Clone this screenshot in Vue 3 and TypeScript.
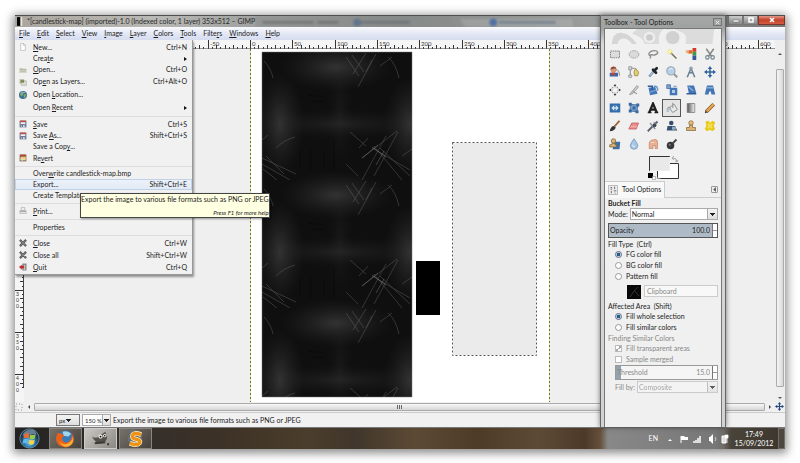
<script setup lang="ts">
import { ref } from 'vue'

interface MenuRow {
  label: string
  keys?: string
  icon?: string
  size?: 'mid' | 'tall'
  submenu?: boolean
  active?: boolean
}

const menuBar = ['_File', '_Edit', '_Select', '_View', '_Image', '_Layer', '_Colors', '_Tools', 'Filte_rs', '_Windows', '_Help']

const groups: MenuRow[][] = [
  [
    { label: '_New...', keys: 'Ctrl+N', icon: 'page', size: 'mid' },
    { label: 'Crea_te', submenu: true },
    { label: '_Open...', keys: 'Ctrl+O', icon: 'folder' },
    { label: 'Op_en as Layers...', keys: 'Ctrl+Alt+O', icon: 'layers', size: 'tall' },
    { label: 'Open _Location...', icon: 'globe', size: 'tall' },
    { label: 'Open _Recent', submenu: true, size: 'tall' },
  ],
  [
    { label: '_Save', keys: 'Ctrl+S', icon: 'save', size: 'mid' },
    { label: 'Save _As...', keys: 'Shift+Ctrl+S', icon: 'save' },
    { label: 'Save a Cop_y...' },
    { label: 'Re_vert', icon: 'revert', size: 'mid' },
  ],
  [
    { label: 'Over_write candlestick-map.bmp' },
    { label: 'Export...', keys: 'Shift+Ctrl+E', active: true },
    { label: 'Create Template...' },
  ],
  [{ label: '_Print...', icon: 'print', size: 'mid' }],
  [{ label: 'Propert_ies', size: 'mid' }],
  [
    { label: '_Close', keys: 'Ctrl+W', icon: 'close', size: 'mid' },
    { label: 'Close all', keys: 'Shift+Ctrl+W', icon: 'close', size: 'mid' },
    { label: '_Quit', keys: 'Ctrl+Q', icon: 'quit', size: 'mid' },
  ],
]

// Splits a label at its mnemonic marker: text before, underlined letter, rest.
function split(label: string): [string, string, string] {
  const i = label.indexOf('_')
  return i < 0 ? [label, '', ''] : [label.slice(0, i), label[i + 1], label.slice(i + 2)]
}

const menuIcons: Record<string, string> = {
  page: '<path d="M3 1h5l3 3v9H3z" fill="#fff" stroke="#a5a5a5"/><path d="M8 1v3h3" fill="#ddd" stroke="#a5a5a5"/>',
  folder: '<path d="M1 4h5l1 1h6v7H1z" fill="#b9bba6"/><path d="M1 7h12v5H1z" fill="#d6d8c4"/><path d="M2 9h10" stroke="#9a9c88"/>',
  layers: '<path d="M1 2h8v8H1z" fill="#b8bd97"/><path d="M4 5h9v8H4z" fill="#dcdccf" stroke="#aaa"/><path d="M3 4h6v4H3z" fill="#73804f"/>',
  globe: '<circle cx="7" cy="7" r="7" fill="#3f6f94"/><path d="M2 4l4-2 2 3-3 4-3-2zM8 7l4-2v4l-3 4z" fill="#7fae6d"/><path d="M3 2l8 1" stroke="#c5dcec"/>',
  save: '<path d="M1 1h12v12H1z" fill="#6f7f97"/><path d="M2 1h10v3H2z" fill="#c94a42"/><path d="M3 4h8v3H3z" fill="#f2f2f2"/><path d="M4 9h6v4H4z" fill="#d8dde4"/><path d="M5 9h2v3H5z" fill="#46546b"/>',
  revert: '<path d="M1 1h12v12H1z" fill="#8a7768"/><path d="M2 1h10v3H2z" fill="#b8453a"/><path d="M3 5h9v5H3z" fill="#f0c66a"/><path d="M2 9l4-4v3h5v3H6v2z" fill="#e7dcae"/>',
  print: '<path d="M4 1h6v5H4z" fill="#f4f4f4" stroke="#999"/><path d="M1 6h12v6H1z" fill="#aaa"/><path d="M2 10h10" stroke="#eee" stroke-width="2"/>',
  close: '<path d="M3 3l8 8M11 3l-8 8" stroke="#5d5d5d" stroke-width="4" stroke-linecap="square"/><path d="M3 3l8 8M11 3l-8 8" stroke="#999"/>',
  quit: '<path d="M6 1h7v12H6z" fill="#777"/><path d="M8 3h3v9H8z" fill="#ccc"/><path d="M0 7l5-4v2h4v4H5v3z" fill="#c22b31"/>',
}

const tools: { name: string; art: string }[] = [
  { name: 'Rectangle Select', art: '<path d="M2 4h12v9H2z" fill="#dcdcdc" stroke="#666" stroke-dasharray="2 1"/>' },
  { name: 'Ellipse Select', art: '<ellipse cx="8" cy="8.500" rx="6.500" ry="5" fill="#dadada" stroke="#888" stroke-dasharray="2 1"/>' },
  { name: 'Free Select', art: '<path d="M5 11C0 9 3 4 9 3.500s7 4 2 5.500-5-1-6 0 1 2-1 5" fill="none" stroke="#8b8b8b" stroke-width="1.800"/>' },
  { name: 'Fuzzy Select', art: '<path d="M6 6l8 8" stroke="#77705a" stroke-width="2"/><path d="M5 1v8M1 5h8M2 2l6 6M8 2L2 8" stroke="#eedd70"/><circle cx="5" cy="5" r="2" fill="#fff6a8"/>' },
  { name: 'Select by Color', art: '<path d="M10 0h5v5h-5z" fill="#d33a2d"/><path d="M10 5h5v5h-5z" fill="#3c9a42"/><path d="M10 10h5v6h-5z" fill="#35579e"/><path d="M1 3h9v5H5L1 6z" fill="#e6b27a"/><path d="M5 3h5v4H5z" fill="#e2662e"/>' },
  { name: 'Scissors Select', art: '<path d="M3 1l7 10M13 1L6 11" stroke="#888" stroke-width="2"/><circle cx="4.500" cy="12.500" r="2.300" fill="none" stroke="#71828c" stroke-width="1.500"/><circle cx="11.500" cy="12.500" r="2.300" fill="none" stroke="#71828c" stroke-width="1.500"/>' },
  { name: 'Foreground Select', art: '<circle cx="6" cy="5" r="4" fill="#d69b78"/><path d="M2 5c0-6 8-6 8 0L8 3z" fill="#8d4a3c"/><path d="M1 9h11v5H1z" fill="#3d66a5"/><path d="M9 5q5 0 5 8" stroke="#999" fill="none" stroke-width="1.500"/><path d="M3 9h5v3H3z" fill="#c44532"/>' },
  { name: 'Paths', art: '<path d="M3 15V3h6" fill="none" stroke="#8b9296" stroke-width="1.500"/><path d="M1 1h4v4H1zM1 12h4v3H1z" fill="#d9dcde" stroke="#888"/><path d="M10 3l4 5-1 5H9L8 8z" fill="#e4d174" stroke="#927e31"/>' },
  { name: 'Color Picker', art: '<path d="M3 14L10 6" stroke="#6a8aa9" stroke-width="3"/><path d="M4 13L10 6" stroke="#e6eef5"/><path d="M8 5l4 4M11 5l2-2" stroke="#20252b" stroke-width="3.500" stroke-linecap="round"/>' },
  { name: 'Zoom', art: '<path d="M10 10l5 5" stroke="#999" stroke-width="3"/><circle cx="6.500" cy="6.500" r="5.500" fill="#b5d0e9" stroke="#9aa7b3" stroke-width="1.500"/><path d="M4 5q2-3 5-1" stroke="#fff" fill="none"/>' },
  { name: 'Measure', art: '<path d="M8 3L3 15M8 3l5 12M5 9h6" stroke="#687e91" stroke-width="2" fill="none"/><circle cx="8" cy="3" r="2.300" fill="#8fa0ae"/>' },
  { name: 'Move', art: '<path d="M8 0l3 4H9v3h3V5l4 3-4 3V9H9v3h2l-3 4-3-4h2V9H4v2L0 8l4-3v2h3V4H5z" fill="#33639f"/>' },
  { name: 'Align', art: '<path d="M8 0l2 3H6zM8 16l2-3H6zM0 8l3-2v4zM16 8l-3-2v4z" fill="#333"/><path d="M4 4l2 2M12 4l-2 2M4 12l2-2M12 12l-2-2" stroke="#555"/><path d="M5 5h6v6H5z" fill="#fafafa" stroke="#ccc"/>' },
  { name: 'Crop', art: '<path d="M2 14L12 2l2 2-8 9z" fill="#d1d1d1" stroke="#888"/><path d="M6 10l6 3" stroke="#999" stroke-width="1.500"/>' },
  { name: 'Rotate', art: '<path d="M2 5l9-1 3 9-10 2z" fill="#4376b6"/><path d="M1 3h6v5" fill="none" stroke="#315c94" stroke-width="2"/><path d="M9 3q6-1 5 6" fill="none" stroke="#6c95c6" stroke-width="2"/><path d="M4 11l8-3" stroke="#9cbbdf"/>' },
  { name: 'Scale', art: '<path d="M5 5h10v10H5z" fill="#4376b6"/><path d="M1 1h5v5H1z" fill="#7fa2cc" stroke="#3a679f"/><path d="M8 8h4v4H8z" fill="#b4cbe5"/><path d="M10 3h4" stroke="#3a679f"/>' },
  { name: 'Shear', art: '<path d="M3 2h9l3 10H5z" fill="#4376b6"/><path d="M2 13h13" stroke="#315c94" stroke-width="2"/><path d="M5 4l6 5" stroke="#8baed8" stroke-width="2"/>' },
  { name: 'Perspective', art: '<path d="M4 2h8l3 12h-5l-1-4H7l-1 4H1z" fill="#4376b6"/><path d="M4 5h8" stroke="#86aad4" stroke-width="2"/>' },
  { name: 'Flip', art: '<path d="M1 2h14v12H1z" fill="#336da9"/><path d="M3 8l4-4v3h2V4l4 4-4 4V9H7v3z" fill="#cfe1f1"/>' },
  { name: 'Cage Transform', art: '<path d="M3 3l10 1-1 9-9-1z" fill="#7ba1ce" stroke="#365f92"/><path d="M1 1h4v4H1zM11 2h4v4h-4zM10 11h4v4h-4zM1 10h4v4H1zM6 6h4v4H6z" fill="#37699f"/>' },
  { name: 'Text', art: '<path d="M3 14L8 2l5 12M5 10h6" fill="none" stroke="#1e1e1e" stroke-width="3"/><path d="M1 14h5M10 14h5" stroke="#1e1e1e" stroke-width="2"/>' },
  { name: 'Bucket Fill', art: '<path d="M5 7l6-4 4 7-6 4q-3-3-4-7z" fill="#e9e9e9" stroke="#777"/><path d="M9 8V1M5 7q-4 0-3 6" stroke="#8e9ba5" stroke-width="1.500" fill="none"/><path d="M1 9l4-1-1 5H1z" fill="#aec1cf"/>' },
  { name: 'Blend', art: '<linearGradient id="bl"><stop stop-color="#555"/><stop offset="1" stop-color="#f5f5f5"/></linearGradient><path d="M3 2h10v12H3z" fill="url(#bl)" stroke="#777"/>' },
  { name: 'Pencil', art: '<path d="M3 13L13 3" stroke="#8d5b25" stroke-width="5"/><path d="M3 13L13 3" stroke="#e3a651" stroke-width="3"/><path d="M1 15l1-4 3 3z" fill="#444"/>' },
  { name: 'Paintbrush', art: '<path d="M7 9l7-8" stroke="#9d612f" stroke-width="2.500"/><path d="M1 15q1-6 5-7l3 2q-2 5-8 5z" fill="#343434"/>' },
  { name: 'Eraser', art: '<path d="M5 4h9l-3 8H1z" fill="#e98d8b" stroke="#bf5558"/><path d="M3 9h9" stroke="#f7c5c2"/>' },
  { name: 'Airbrush', art: '<path d="M1 15L14 2" stroke="#5f666c" stroke-width="2.500"/><path d="M4 4l7 8M9 3l3 4" stroke="#8b969f" stroke-width="2"/><circle cx="10" cy="7" r="2.500" fill="#41474e"/>' },
  { name: 'Ink', art: '<circle cx="7" cy="4" r="3" fill="#3a4c66"/><path d="M2 8h10l3 6H1z" fill="#34506f"/><path d="M8 9h5v4H8z" fill="#93acc4"/>' },
  { name: 'Clone', art: '<circle cx="8" cy="4" r="3" fill="#e4bd82" stroke="#8b6a39"/><path d="M6 7h4v3h4v4H2v-4h4z" fill="#dcb377" stroke="#8b6a39"/>' },
  { name: 'Heal', art: '<path d="M2 2l4-1 2 3 3-3 4 2-2 5 2 4-4 3-3-2-4 2-3-3 2-4z" fill="#e8c91c"/><path d="M5 5l6 6M11 5l-6 6" stroke="#f6e262" stroke-width="2"/>' },
  { name: 'Perspective Clone', art: '<path d="M6 5h9l-1 10H5z" fill="#3e6fa7"/><circle cx="6" cy="4" r="3" fill="#ddb576" stroke="#7d6134"/><path d="M4 7h4v2h2v3H1V9h3z" fill="#ddb576" stroke="#7d6134"/>' },
  { name: 'Blur', art: '<path d="M8 1q5 7 5 9a5 5 0 0 1-10 0q0-2 5-9z" fill="#a9c7e2" stroke="#6a93ba"/><path d="M6 9q0 3 3 3" stroke="#fff" fill="none"/>' },
  { name: 'Smudge', art: '<path d="M3 14V7q0-3 3-4l5-1q3 0 3 4v8h-3v-4H8v4z" fill="#e8b192" stroke="#c28564"/><path d="M5 6h5" stroke="#fbe2d3"/>' },
  { name: 'Dodge', art: '<circle cx="6" cy="10" r="5" fill="#383838"/><path d="M9 7l5-5" stroke="#4a4a4a" stroke-width="2.500"/><circle cx="5" cy="9" r="1.500" fill="#777"/>' },
]
const currentTool = ref('Bucket Fill')

const STEP = 42.3
const topTicks = Array.from({ length: 190 }, (_, i) => {
  const n = i - 50
  return { x: Math.round(226 + (n * STEP) / 10), h: n % 10 === 0 ? 9 : n % 2 === 0 ? 4 : 2 }
}).filter((t) => t.x > 0)
const topLabels = Array.from({ length: 14 }, (_, i) => ({ x: Math.round(226 + (i - 1) * STEP) + 2, text: String((i - 1) * 50) }))
const sideTicks = Array.from({ length: 84 }, (_, n) => ({ y: Math.round((n * STEP) / 10) - 13, w: n % 10 === 0 ? 9 : n % 2 === 0 ? 4 : 2 })).filter((t) => t.y > 0)
const sideLabels = [300, 350, 400].map((v) => ({ y: Math.round((v / 50) * STEP) - 13, digits: String(v).split('') }))

const mode = ref('Normal')
const fillBy = ref('Composite')
const unit = ref('px')
const zoom = ref('150 %')
const fillType = ref('fg')
const area = ref('whole')
const opacity = ref('100.0')
const threshold = ref('15.0')
</script>

<template>
  <div class="page">
    <main class="desktop">
      <header class="titlebar">
        <svg class="app-mark" viewBox="0 0 8 10"><path d="M0 0h4v10H0z" fill="#050505" /><path d="M4 0h2v10H4z" fill="#e8e8dc" /></svg>
        <h1>*[candlestick-map] (imported)-1.0 (Indexed color, 1 layer) 353x512 – GIMP</h1>
        <svg class="ghosts" viewBox="0 0 500 12" preserveAspectRatio="none">
          <g class="haze">
            <path d="M0 0h205l8 12H0z" fill="#888b8a" opacity=".5" />
            <path d="M8 7h54M66 7h22" stroke="#4d5150" stroke-width="3" opacity=".4" />
            <path d="M112 7h52" stroke="#4f5865" stroke-width="3" opacity=".4" />
            <circle cx="108" cy="7" r="4" fill="#50698e" opacity=".7" />
            <path d="M216 3h120v9H222z" fill="#c8cccb" opacity=".25" />
            <circle cx="252" cy="7" r="4" fill="#3d64a4" opacity=".8" />
            <path d="M258 7h60" stroke="#53657f" stroke-width="3" opacity=".5" />
          </g>
        </svg>
        <div class="win-buttons">
          <button aria-label="Minimize"><svg viewBox="0 0 8 8"><path d="M1 4h6v2H1z" fill="#fff" stroke="#555" stroke-width=".5" /></svg></button>
          <button aria-label="Maximize"><svg viewBox="0 0 8 8"><path d="M2 2h4v4H2z" fill="none" stroke="#fff" stroke-width="1.500" /></svg></button>
          <button class="x" aria-label="Close window"><svg viewBox="0 0 8 8"><path d="M2 2l4 4M6 2L2 6" stroke="#fff" stroke-width="1.500" /></svg></button>
        </div>
      </header>

      <nav class="menubar">
        <button v-for="m in menuBar" :key="m">{{ split(m)[0] }}<u>{{ split(m)[1] }}</u>{{ split(m)[2] }}</button>
      </nav>

      <section class="workspace">
        <svg class="top-ruler" height="9">
          <path v-for="t in topTicks" :key="t.x" :d="`M${t.x + 0.5} 9v-${t.h}`" stroke="#333" />
          <text v-for="l in topLabels" :key="l.x" :x="l.x" y="6">{{ l.text }}</text>
          <path d="M0 8.500h761" stroke="#555" stroke-width=".6" />
        </svg>
        <svg class="side-ruler" width="9">
          <path v-for="t in sideTicks" :key="t.y" :d="`M9 ${t.y + 0.5}h-${t.w}`" stroke="#333" />
          <path d="M8.500 0v338" stroke="#444" />
          <template v-for="l in sideLabels" :key="l.y">
            <text v-for="(d, i) in l.digits" :key="i" x="1" :y="l.y + 6 + i * 6">{{ d }}</text>
          </template>
        </svg>
        <div class="canvas">
          <svg width="751" height="353">
            <defs>
              <radialGradient id="glow"><stop stop-color="#3c3c3c" stop-opacity=".8" /><stop offset="1" stop-color="#262626" stop-opacity="0" /></radialGradient>
              <pattern id="scratches" x="238" y="3" width="150" height="128" patternUnits="userSpaceOnUse">
                <path d="M0 0h150v128H0z" fill="#0f0f0f" />
                <ellipse cx="74" cy="15" rx="56" ry="24" fill="url(#glow)" />
                <ellipse cx="74" cy="143" rx="56" ry="24" fill="url(#glow)" />
                <ellipse cx="18" cy="72" rx="24" ry="52" fill="url(#glow)" />
                <ellipse cx="148" cy="72" rx="26" ry="48" fill="url(#glow)" />
                <ellipse cx="78" cy="72" rx="90" ry="15" fill="url(#glow)" opacity=".5" />
                <ellipse cx="78" cy="62" rx="14" ry="60" fill="url(#glow)" opacity=".25" />
                <g fill="none" stroke="#777" stroke-width=".7" opacity=".5">
                  <path d="M2 9q7 7 9 17M126 5q8 7 11 21M118 14l12-9M84 5l13 19M90 3l12 17M114 2L96 35M104 1l-13 21M110 8l-6 12" />
                  <path d="M100 106l35-27M110 96l38 22M112 94l28 34M124 84l-24 44M136 80l-24 44M118 96l30 28M84 112q6 6 12 12M88 80l16 14M106 86l-9 10M140 104l10-7" />
                  <path d="M14 96q8-8 19-11M0 88l6-5M0 106l34 16M0 112l28 16M4 104l18 18M1 117l14 11" />
                </g>
                <g stroke="#bbb" stroke-width=".7" opacity=".4"><path d="M110 95l14 10M100 106l16-13M122 99l-8 14" /></g>
                <path d="M46 43l15 2M50 49h13M38 100v17M49 98v20M62 99v16M72 88v30" stroke="#000" opacity=".35" />
              </pattern>
            </defs>
            <path d="M226 0h299v353H226z" fill="#fff" />
            <path d="M226.500 0v353M525.500 0v353" stroke="#e6e58b" />
            <path d="M226.500 0v353M525.500 0v353" stroke="#6c7045" stroke-dasharray="2 2" />
            <path d="M238 3h150v345H238z" fill="url(#scratches)" stroke="#777" stroke-width=".5" />
            <path d="M392 212h24v54h-24z" fill="#000" />
            <path d="M428.500 93.500h84v213h-84z" fill="#ebebeb" stroke="#fff" />
            <path d="M428.500 93.500h84v213h-84z" fill="none" stroke="#555" stroke-dasharray="2 2" />
          </svg>
        </div>
        <div class="vscroll"><span class="up"></span><i></i><span class="down"></span></div>
        <svg class="corner" viewBox="0 0 9 10"><path d="M1 2h6v6H1z" fill="none" stroke="#999" stroke-dasharray="1 2" /></svg>
        <div class="hscroll"><span class="left"></span><i><svg class="grip" viewBox="0 0 5 4"><path d="M.5 0v4M2.500 0v4M4.500 0v4" stroke="#666" /></svg></i><span class="right"></span></div>
        <svg class="pan" viewBox="0 0 16 16"><path d="M8 0l3 4H9v3h3V5l4 3-4 3V9H9v3h2l-3 4-3-4h2V9H4v2L0 8l4-3v2h3V4H5z" fill="#24497c" /></svg>
      </section>

      <footer class="status">
        <select v-model="unit" class="unit" aria-label="Unit"><option>px</option></select>
        <select v-model="zoom" class="zoom" aria-label="Zoom"><option>150 %</option></select>
        <span>Export the image to various file formats such as PNG or JPEG</span>
      </footer>

      <div class="taskbar">
        <button class="orb" aria-label="Start">
          <svg viewBox="0 0 24 24">
            <defs><radialGradient id="orb" cy=".7"><stop stop-color="#69d4ef" /><stop offset=".6" stop-color="#286fa5" /><stop offset="1" stop-color="#173955" /></radialGradient></defs>
            <circle cx="12" cy="12" r="11" fill="url(#orb)" stroke="#7ba5bd" stroke-width=".8" />
            <path d="M4 9q1-6 8-7t8 6q-8-3-16 1z" fill="#fff" opacity=".35" />
            <path d="M6 7q3-2 6 0l-1 5q-3-2-6 0z" fill="#ec6a31" /><path d="M13 7q3 2 6 0l-1 5q-3 2-6 0z" fill="#9bcb46" />
            <path d="M5 13q3-2 6 0l-1 5q-3-2-6 0z" fill="#63b7ec" /><path d="M12 13q3 2 6 0l-1 5q-3 2-6 0z" fill="#f8d34b" />
          </svg>
        </button>
        <button class="task" aria-label="Firefox">
          <svg viewBox="0 0 20 20">
            <circle cx="10" cy="9.500" r="8" fill="#387bb9" /><path d="M7 3q5-2 9 2l-3 3-5-1z" fill="#a1d7ee" />
            <path d="M2 4q2 1 4 1 2 1 3 3-4 0-2 4 3 4 7 1 4-3 2-9 5 6 1 12-4 4-9 3-7-1-8-8 0-4 2-7z" fill="#e8611b" />
            <path d="M3 12q4 6 10 3 4-2 5-7 1 7-4 10-7 3-11-6z" fill="#f8b131" />
          </svg>
        </button>
        <button class="task current" aria-label="GIMP">
          <svg viewBox="0 0 20 20">
            <path d="M1 8q4 3 8-1l6-4q1 3 2 5 0 6-6 7-6 1-10-7z" fill="#555049" />
            <circle cx="10" cy="8" r="2.200" fill="#eee" /><circle cx="14.500" cy="7" r="1.800" fill="#eee" /><circle cx="10" cy="8" r="1" /><circle cx="14.500" cy="7" r=".8" />
            <path d="M4 15l11-1" stroke="#3e3833" stroke-width="2" /><path d="M17 15h2v2h-2z" fill="#333" />
          </svg>
        </button>
        <button class="task" aria-label="S">
          <svg viewBox="0 0 20 20">
            <path d="M5 1h5l2 2h4l1 5-2 7-9 2-4-5 1-8z" fill="#67717a" />
            <path d="M16 6q-8-3-9 1-1 3 4 4 5 1 3 4-2 3-10 0" fill="none" stroke="#fff0c2" stroke-width="5" />
            <path d="M16 6q-8-3-9 1-1 3 4 4 5 1 3 4-2 3-10 0" fill="none" stroke="#ee9218" stroke-width="3.500" />
          </svg>
        </button>
        <div class="tray">
          <span>EN</span>
          <svg viewBox="0 0 64 12">
            <path d="M2 8l2-2 2 2z" fill="#fff" />
            <path d="M15 3v7" stroke="#fff" /><path d="M15 3h3l1 1h3v3h-7z" fill="#fff" />
            <path d="M28 10V8M30 10V7M32 10V5M34 10V3" stroke="#fff" stroke-width="1.500" />
            <path d="M43 4h1l3-3v10l-3-3h-1z" fill="#fff" /><path d="M49 4q2 2 0 4" stroke="#ccc" fill="none" />
            <path d="M56 3h4v7h-4z" fill="#ddd" stroke="#fff" /><path d="M59 2h3v3h-3zM61 5v5" fill="#fff" stroke="#fff" stroke-width=".7" />
          </svg>
        </div>
        <time class="clock">17:49<br />15/09/2012</time>
        <button class="peek" aria-label="Show desktop"></button>
      </div>

      <div class="menu" role="menu">
        <div v-for="(g, gi) in groups" :key="gi" class="group">
          <button v-for="r in g" :key="r.label" role="menuitem" class="row" :class="[r.size, { active: r.active }]">
            <svg class="glyph" viewBox="0 0 14 14" v-html="r.icon ? menuIcons[r.icon] : ''"></svg>
            <span class="name">{{ split(r.label)[0] }}<u>{{ split(r.label)[1] }}</u>{{ split(r.label)[2] }}</span>
            <span v-if="r.keys" class="keys">{{ r.keys }}</span>
            <span v-if="r.submenu" class="arrow"></span>
          </button>
        </div>
      </div>

      <div class="tip" role="tooltip">
        <p>Export the image to various file formats such as PNG or JPEG</p>
        <em>Press F1 for more help</em>
      </div>

      <aside class="toolbox">
        <header><h2>Toolbox - Tool Options</h2><button aria-label="Close toolbox"><svg viewBox="0 0 8 8"><path d="M2 2l4 4M6 2L2 6" stroke="#eee" /></svg></button></header>
        <div class="dock">
          <svg class="banner" viewBox="0 0 120 17" preserveAspectRatio="none">
            <path d="M7 16Q8 3 17 4t16 12h-5q-6-8-12-5-3 2-3 5z" fill="#d5d5d5" />
            <path d="M33 0h28q-7 5-5 16H41Q39 8 28 5z" fill="#dbdbdb" /><circle cx="46" cy="9" r="6" fill="#eee" /><circle cx="46" cy="9" r="3.500" fill="#ccc" />
            <path d="M61 0h52l-2 16H83q4-12-8-14z" fill="#dcdcdc" /><circle cx="70" cy="9" r="9" fill="#eee" /><circle cx="70" cy="9" r="7" fill="#d1d1d1" />
          </svg>
          <div class="tools">
            <button v-for="t in tools" :key="t.name" :aria-label="t.name" :class="{ on: t.name === currentTool }" @click="currentTool = t.name">
              <svg viewBox="0 0 16 16" v-html="t.art"></svg>
            </button>
          </div>
          <svg class="swatches" viewBox="0 0 34 26">
            <path d="M10.500 8.500h21v15h-21z" fill="#fff" stroke="#333" />
            <path d="M2.500 1.500h20v14h-20z" fill="#e9e9e9" stroke="#333" /><path d="M22.500 2v14M3 15.500h20" stroke="#eee" />
            <path d="M2.500 16v7h11" fill="none" stroke="#ddd" /><path d="M1 18h5v5H1z" fill="#000" /><path d="M5.500 21.500h3v3h-3z" fill="#fff" stroke="#777" stroke-width=".5" />
            <path d="M26 3q4 0 4 4M25 3l2-2M25 3l2 2M30 7l-2-1M30 7l1-2" stroke="#aaa" fill="none" />
          </svg>
          <div class="tabs">
            <button class="tab"><svg viewBox="0 0 12 12"><path d="M.5.500h11v11H.5z" fill="#eee" stroke="#aaa" /><path d="M3 3h2M3 5h2M4 7v3M8 2v3M7 7h3M8 9l1 1" stroke="#555" /></svg>Tool Options</button>
            <button class="fold" aria-label="Configure tab"><svg viewBox="0 0 5 5"><path d="M4 0v5L1 2.500z" fill="#666" /></svg></button>
          </div>
          <form class="options" @submit.prevent>
            <h3>Bucket Fill</h3>
            <div class="field"><label for="mode">Mode:</label><select id="mode" v-model="mode"><option>Normal</option></select></div>
            <div class="scale full"><label for="opacity">Opacity</label><input id="opacity" v-model="opacity" /><span class="spin"></span></div>
            <fieldset>
              <legend>Fill Type&nbsp; (Ctrl)</legend>
              <label class="pick"><input v-model="fillType" type="radio" value="fg" />FG color fill</label>
              <label class="pick"><input v-model="fillType" type="radio" value="bg" />BG color fill</label>
              <label class="pick"><input v-model="fillType" type="radio" value="pattern" />Pattern fill</label>
            </fieldset>
            <div class="pattern">
              <svg viewBox="0 0 14 14"><path d="M0 0h14v14H0z" fill="#080808" /><path d="M3 12q5-8 8-10M7 5l5 6" stroke="#333" fill="none" /></svg>
              <input value="Clipboard" aria-label="Pattern" disabled />
            </div>
            <fieldset>
              <legend>Affected Area&nbsp; (Shift)</legend>
              <label class="pick"><input v-model="area" type="radio" value="whole" />Fill whole selection</label>
              <label class="pick"><input v-model="area" type="radio" value="similar" />Fill similar colors</label>
            </fieldset>
            <fieldset class="dim" disabled>
              <legend>Finding Similar Colors</legend>
              <label class="pick"><input type="checkbox" checked />Fill transparent areas</label>
              <label class="pick"><input type="checkbox" />Sample merged</label>
              <div class="scale low"><label for="threshold">Threshold</label><input id="threshold" v-model="threshold" /><span class="spin"></span></div>
              <div class="field inset"><label for="by">Fill by:</label><select id="by" v-model="fillBy"><option>Composite</option></select></div>
            </fieldset>
          </form>
        </div>
      </aside>
    </main>
  </div>
</template>

<style>
body {
  margin: 0;
  background: #fff;
}
</style>

<style scoped>
* {
  box-sizing: border-box;
}
.page {
  min-height: 100vh;
  padding: 15px 15px 14px;
  display: flex;
  font: 7px/9px Lato, "Open Sans", sans-serif;
  color: #1c1c1c;
}
button,
select,
input {
  font: inherit;
  color: inherit;
  margin: 0;
  padding: 0;
  border: 0;
  background: none;
  border-radius: 0;
  appearance: none;
  min-width: 0;
}
svg {
  display: block;
}
h1,
h2,
h3,
p {
  margin: 0;
  font-size: 7px;
  font-weight: 400;
}
.desktop {
  position: relative;
  flex: 1;
  min-width: 0;
  display: flex;
  flex-direction: column;
  background: #efefef;
  box-shadow: 0 2px 9px 2px #0007;
}
.titlebar {
  display: flex;
  align-items: center;
  height: 12px;
  padding-left: 2px;
  border-top: 1px solid #4c504f;
  background: linear-gradient(90deg, #aaa59e, #b9b9b5 18%, #9da09f 32%, #858988 50%, #9a9d9c 75%, #777);
}
.app-mark {
  width: 7px;
  height: 9px;
  margin-right: 3px;
}
.titlebar h1 {
  white-space: nowrap;
  color: #292929;
}
.ghosts {
  flex: 1;
  min-width: 0;
  height: 11px;
}
.haze {
  filter: blur(1px);
}
.win-buttons {
  display: flex;
  align-self: flex-start;
}
.win-buttons button {
  width: 15px;
  height: 9px;
  border: 1px solid #777;
  border-top: 0;
  background: linear-gradient(#ccc, #888);
  display: grid;
  place-items: center;
}
.win-buttons .x {
  width: 27px;
  background: linear-gradient(#e49688, #c3412c 50%, #d45b42);
  border-color: #7b3429;
}
.win-buttons svg {
  width: 8px;
  height: 8px;
}
.menubar {
  display: flex;
  gap: 7px;
  height: 13px;
  padding: 0 4px;
  background: linear-gradient(#f9fafd, #e6eaf6 45%, #d5dcef);
}
.workspace {
  flex: 1;
  display: grid;
  grid-template: 9px minmax(353px, 1fr) 10px / 9px minmax(0, 1fr) 10px;
  background: #f0f0f0;
}
.top-ruler {
  grid-area: 1 / 2;
  width: 100%;
  background: #f5f5f5;
}
.side-ruler {
  grid-area: 2 / 1;
  height: 100%;
  background: #f5f5f5;
}
.workspace text {
  font-size: 6px;
  fill: #333;
}
.workspace .side-ruler text {
  font-size: 5px;
}
.canvas {
  grid-area: 2 / 2;
  overflow: hidden;
  background: #efefef;
}
.vscroll {
  grid-area: 1 / 3 / 3;
  display: flex;
  flex-direction: column;
  align-items: center;
  padding: 13px 0 3px;
  background: #eee;
}
.vscroll i {
  flex: 1;
  width: 8px;
  margin: 14px 0 10px;
  border: 1px solid #aaa;
  border-radius: 1px;
  background: linear-gradient(90deg, #f5f5f5, #d8d8d8);
}
.up,
.down {
  border: 2px solid transparent;
  height: 0;
}
.up {
  border-bottom-color: #555;
  border-top: 0;
}
.down {
  border-top-color: #555;
  border-bottom: 0;
}
.corner {
  grid-area: 3 / 1;
}
.hscroll {
  grid-area: 3 / 2;
  display: flex;
  align-items: center;
  gap: 4px;
  padding: 0 4px;
}
.hscroll i {
  flex: 1;
  height: 8px;
  border: 1px solid #aaa;
  border-radius: 1px;
  background: linear-gradient(#f7f7f7, #d5d5d5);
  display: grid;
  place-items: center;
}
.grip {
  width: 5px;
  height: 4px;
}
.left,
.right {
  border: 2px solid transparent;
}
.left {
  border-right-color: #444;
  border-left: 0;
}
.right {
  border-left-color: #444;
  border-right: 0;
}
.pan {
  grid-area: 3 / 3;
  width: 9px;
  height: 9px;
}
.status {
  display: flex;
  align-items: center;
  gap: 2px;
  height: 15px;
  padding-left: 41px;
  border-top: 1px solid #ccc;
  background: #f1f1f1;
  white-space: nowrap;
}
select {
  border: 1px solid #aaa;
  background-color: #fff;
  background-image: conic-gradient(from 315deg at 50% 100%, #222 90deg, transparent 0), linear-gradient(#aaa, #aaa), linear-gradient(#f4f4f4, #dedede);
  background-size: 5px 3px, 1px 100%, 9px 100%;
  background-position: right 2px center, right 9px center, right center;
  background-repeat: no-repeat;
}
.unit,
.zoom {
  height: 12px;
  font-size: 6px;
}
.unit {
  width: 24px;
  padding-left: 2px;
  border-color: #777;
  background-size: 5px 3px, 0 0, 100% 100%;
  background-position: 9px center, 0 0, 0 0;
}
.zoom {
  width: 29px;
  padding-left: 2px;
  background-size: 5px 3px, 1px 100%, 7px 100%;
  background-position: right 1px center, right 7px center, right center;
}
.taskbar {
  display: flex;
  align-items: center;
  height: 22px;
  border-top: 1px solid #777;
  color: #fff;
  background: linear-gradient(90deg, #242321, #35302b 17%, #3c3126 26%, #4a3d2b 38%, #40362b 44%, #5c4a35 52%, #4d3b28 60%, #5d4a36 68%, #4d3929 74%, #65503a 76%, #888 77%, #777 91%, #706c66 92%, #49433a 93%, #3c352e);
}
.orb {
  width: 22px;
  height: 21px;
  margin: 0 8px 0 4px;
}
.orb svg {
  height: 21px;
}
.task {
  width: 33px;
  height: 21px;
  margin-right: 2px;
  border: 1px solid #8b8580;
  background: linear-gradient(135deg, #77716b, #46413c);
  display: grid;
  place-items: center;
}
.task.current {
  background: linear-gradient(135deg, #cbc9c5, #8b8782);
  border-color: #ccc;
}
.task svg {
  width: 19px;
  height: 19px;
}
.tray {
  margin-left: auto;
  display: flex;
  align-items: center;
  gap: 8px;
}
.tray svg {
  width: 64px;
  height: 12px;
}
.clock {
  width: 48px;
  text-align: center;
  white-space: nowrap;
}
.peek {
  width: 7px;
  height: 21px;
  border: 1px solid #746d66;
  background: #4e4740;
}
.menu {
  position: absolute;
  left: 0;
  top: 25px;
  width: 178px;
  padding: 1px 0;
  background: #f1f1f1;
  border: solid #999;
  border-width: 0 1px 1px 0;
  box-shadow: 1px 2px 2px #0006;
}
.group + .group {
  border-top: 1px solid #ddd;
  margin-top: 2px;
  padding-top: 1px;
}
.row {
  display: flex;
  align-items: center;
  width: 100%;
  height: 11px;
  padding: 0 5px 0 4px;
  text-align: left;
}
.row.mid {
  height: 12px;
}
.row.tall {
  height: 13px;
}
.row.active {
  background: linear-gradient(#eef3fa, #e0e9f5);
  box-shadow: inset 0 0 0 1px #bfd2ea;
}
.glyph {
  width: 8px;
  height: 8px;
  margin-right: 6px;
}
.name {
  flex: 1;
  white-space: nowrap;
}
.keys {
  white-space: nowrap;
}
.arrow {
  border: 2px solid transparent;
  border-left: 3px solid #111;
  border-right: 0;
}
.tip {
  position: absolute;
  left: 65px;
  top: 178px;
  min-width: 182px;
  height: 25px;
  padding: 1px 0;
  border: 1px solid #444;
  background: #ffffe1;
  box-shadow: 1px 1px 2px #0006;
  display: flex;
  flex-direction: column;
  justify-content: space-between;
  white-space: nowrap;
}
.tip em {
  align-self: flex-end;
  font-size: 6px;
  line-height: 7px;
}
.toolbox {
  position: absolute;
  right: 59px;
  top: 0;
  bottom: 22px;
  width: 126px;
  display: flex;
  flex-direction: column;
  padding: 0 3px;
  border: 1px solid #666;
  border-bottom: 0;
  background: linear-gradient(#a5a7a6, #a0a2a1 12px, #d8d8d8 28px, #d2d2d2);
  box-shadow: 0 0 5px #0008;
}
.toolbox header {
  display: flex;
  justify-content: space-between;
  align-items: center;
  height: 12px;
}
.toolbox h2 {
  white-space: nowrap;
}
.toolbox header button {
  width: 9px;
  height: 8px;
  border: 1px solid #777;
}
.dock {
  flex: 1;
  border: 1px solid #777;
  border-bottom: 0;
  background: #f0f0f0;
}
.banner {
  width: 100%;
  height: 16px;
}
.tools {
  display: grid;
  grid-template-columns: repeat(6, 19px);
  grid-auto-rows: 18px;
}
.tools button {
  display: grid;
  place-items: center;
}
.tools svg {
  width: 12px;
  height: 12px;
}
.tools .on {
  border: 1px solid #555;
  background: #e4e4e4;
}
.swatches {
  width: 34px;
  height: 26px;
  margin: 2px 0 0 42px;
}
.tabs {
  display: flex;
  justify-content: space-between;
  align-items: center;
  height: 17px;
  border-bottom: 1px solid #ccc;
}
.tab {
  display: flex;
  align-items: center;
  gap: 4px;
  height: 17px;
  padding: 0 3px 0 3px;
  background: #f9f9f9;
  border: 1px solid #ccc;
  border-width: 1px 1px 0 0;
  white-space: nowrap;
}
.tab svg {
  width: 10px;
  height: 10px;
}
.fold {
  width: 7px;
  height: 7px;
  margin-right: 3px;
  border: 1px solid #999;
  border-radius: 1px;
}
.options {
  padding: 1px 3px 0;
}
.options h3 {
  font-weight: 700;
  line-height: 9px;
}
.field {
  display: flex;
  align-items: center;
  gap: 2px;
  height: 12px;
}
.field select {
  flex: 1;
  height: 12px;
  padding-left: 1px;
}
.scale {
  display: flex;
  align-items: center;
  height: 15px;
  margin: 3px 0 2px;
  padding-left: 1px;
  border: 1px solid #555;
}
.scale input {
  flex: 1;
  text-align: right;
  padding-right: 2px;
}
.spin {
  width: 5px;
  height: 13px;
  border-left: 1px solid #777;
  background: linear-gradient(#fff 6px, #999 6px, #999 7px, #fff 7px);
}
.full {
  background: #aebbc7;
}
.low {
  margin: 0 0 1px 7px;
  border-color: #999;
  background: linear-gradient(90deg, #92a3af 5px, #f5f5f5 5px);
}
fieldset {
  margin: 0;
  padding: 0;
  border: 0;
  min-width: 0;
}
legend {
  padding: 0;
  height: 9px;
  white-space: nowrap;
}
.pick {
  display: flex;
  align-items: center;
  gap: 4px;
  height: 11px;
  padding-left: 7px;
  white-space: nowrap;
}
.pick input {
  width: 7px;
  height: 7px;
  border: 1px solid #999;
  background: #fff;
}
.pick input[type='radio'] {
  border-radius: 50%;
}
.pick input[type='radio']:checked {
  background: radial-gradient(#235d84 40%, #cfe3ee 60%);
  border-color: #668;
}
.pick input[type='checkbox']:checked {
  background: linear-gradient(135deg, #fff 40%, #aaa 40%, #aaa 60%, #fff 60%);
}
.dim .pick input {
  border-color: #bbb;
}
.pattern {
  display: flex;
  gap: 3px;
  margin: 3px 0 3px 19px;
}
.pattern svg {
  width: 14px;
  height: 14px;
}
.pattern input {
  flex: 1;
  height: 12px;
  padding-left: 2px;
  border: 1px solid #ccc;
  background: #f8f8f8;
  color: #888;
}
.dim {
  color: #888;
  margin-top: 1px;
}
.inset {
  padding-left: 7px;
}
.inset select {
  background-color: #f5f5f5;
  border-color: #bbb;
}
</style>
